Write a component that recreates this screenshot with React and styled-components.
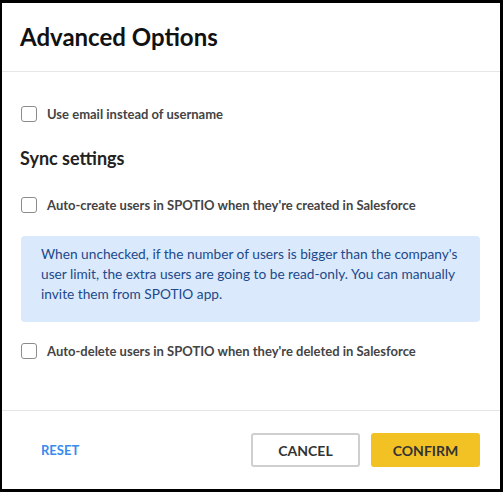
import React from "react";
import styled, { createGlobalStyle } from "styled-components";

const GlobalStyle = createGlobalStyle`
  html, body {
    margin: 0;
    padding: 0;
    background: #000;
  }
  body {
    font-family: Lato, "Noto Sans", sans-serif;
    -webkit-font-smoothing: antialiased;
  }
  #root {
    width: 503px;
    height: 492px;
    box-sizing: border-box;
    padding: 3px 3px 3px 2px;
  }
`;

const Dialog = styled.div`
  height: 100%;
  background: #fff;
  display: flex;
  flex-direction: column;
  color: #333;
`;

const Header = styled.div`
  height: 69px;
  box-sizing: border-box;
  padding: 18px 18px 0;
  border-bottom: 1px solid #e6e6e6;
`;

const Title = styled.h2`
  margin: 0;
  font-size: 24px;
  font-weight: 700;
  color: #111;
  line-height: 32px;
`;

const Body = styled.div`
  flex: 1;
  padding: 30px 20px 0 19px;
  display: flex;
  flex-direction: column;
`;

const Row = styled.label`
  display: flex;
  align-items: center;
  gap: 10px;
  height: 24px;
  margin-bottom: ${(p) => p.$mb || 0}px;
  font-size: 13px;
  font-weight: 700;
  color: #444;
  cursor: pointer;
`;

const Box = styled.span`
  width: 14px;
  height: 14px;
  border: 1.5px solid #8c8c8c;
  border-radius: 3px;
  flex: none;
`;

const Section = styled.h3`
  margin: 0 0 23px -1px;
  font-size: 18px;
  font-weight: 700;
  color: #222;
  line-height: 24px;
`;

const Info = styled.div`
  background: #dbe9fc;
  border-radius: 4px;
  padding: 8px 14px 18px 20px;
  font-size: 13.7px;
  line-height: 20px;
  color: #1c4a8a;
  margin-bottom: 17px;
`;

const Footer = styled.div`
  height: 79px;
  box-sizing: border-box;
  border-top: 1px solid #e6e6e6;
  display: flex;
  align-items: center;
  padding: 0 20px 0 39px;
`;

const LinkButton = styled.button`
  background: none;
  border: none;
  padding: 0;
  font-family: inherit;
  font-size: 13px;
  font-weight: 700;
  color: #3a8bee;
  cursor: pointer;
  margin-right: auto;
`;

const Button = styled.button`
  width: 109px;
  height: 34px;
  box-sizing: border-box;
  border-radius: 3px;
  font-family: inherit;
  font-size: 14px;
  font-weight: 700;
  color: #333;
  cursor: pointer;
  margin-left: ${(p) => p.$ml || 0}px;
  border: ${(p) => (p.$primary ? "none" : "2px solid #cfcfcf")};
  background: ${(p) => (p.$primary ? "#f2c224" : "#fff")};
`;

export default function App() {
  return (
    <>
      <GlobalStyle />
      <Dialog>
        <Header>
          <Title>Advanced Options</Title>
        </Header>
        <Body>
          <Row $mb={20}>
            <Box />
            Use email instead of username
          </Row>
          <Section>Sync settings</Section>
          <Row $mb={19}>
            <Box />
            Auto-create users in SPOTIO when they're created in Salesforce
          </Row>
          <Info>
            When unchecked, if the number of users is bigger than the company's
            user limit, the extra users are going to be read-only. You can
            manually invite them from SPOTIO app.
          </Info>
          <Row>
            <Box />
            Auto-delete users in SPOTIO when they're deleted in Salesforce
          </Row>
        </Body>
        <Footer>
          <LinkButton>RESET</LinkButton>
          <Button>CANCEL</Button>
          <Button $primary $ml={11}>
            CONFIRM
          </Button>
        </Footer>
      </Dialog>
    </>
  );
}
